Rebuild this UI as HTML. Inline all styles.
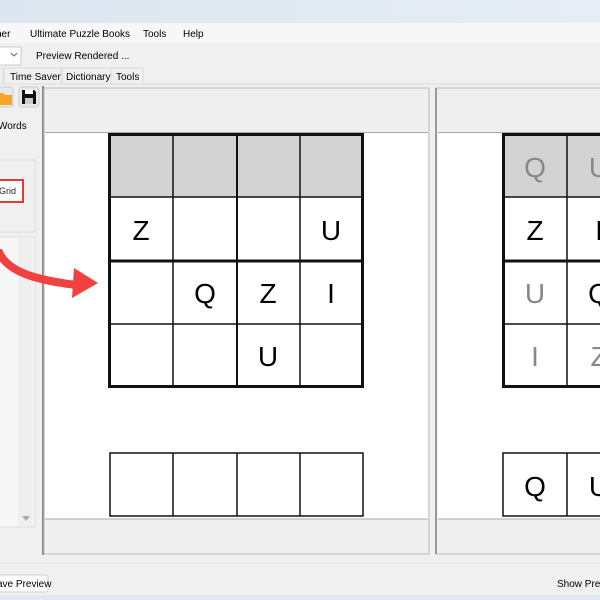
<!DOCTYPE html>
<html><head><meta charset="utf-8"><style>
html,body{margin:0;padding:0;width:600px;height:600px;overflow:hidden;background:#f0f0f0;font-family:"Liberation Sans",sans-serif}
svg{display:block}
</style></head><body>
<svg width="600" height="600" xmlns="http://www.w3.org/2000/svg" font-family="Liberation Sans, sans-serif">
<defs><linearGradient id="tb" x1="0" y1="0" x2="1" y2="0"><stop offset="0" stop-color="#dde6f0"/><stop offset="1" stop-color="#e6edf5"/></linearGradient></defs>
<rect width="600" height="600" fill="#f0f0f0"/>
<rect width="600" height="23" fill="url(#tb)"/>
<rect y="23" width="600" height="20" fill="#f7f7f7"/>
<g font-size="10" fill="#000">
<text x="-4" y="37">her</text><text x="30" y="37">Ultimate Puzzle Books</text><text x="143" y="37">Tools</text><text x="183" y="37">Help</text>
<text x="36" y="59">Preview Rendered ...</text>
</g>
<rect x="-2" y="47" width="23" height="18" fill="#fff" stroke="#ccc"/>
<path d="M11 53 l3 3 l3 -3" stroke="#666" fill="none"/>
<line x1="0" y1="84" x2="600" y2="84" stroke="#ddd"/>
<rect x="-1" y="68" width="4" height="16" fill="#f0f0f0" stroke="#ddd"/>
<rect x="4" y="68" width="57" height="16" fill="#f0f0f0" stroke="#ddd"/>
<rect x="62" y="68" width="49" height="16" fill="#f0f0f0" stroke="#ddd"/>
<rect x="111" y="68" width="32" height="16" fill="#f0f0f0" stroke="#ddd"/>
<g font-size="10"><text x="10" y="80">Time Saver</text><text x="66" y="80">Dictionary</text><text x="116" y="80">Tools</text></g>
<rect x="-4" y="87" width="17" height="20" rx="3" fill="#e8e8e8" stroke="#ccc"/>
<path d="M-2 93 h5 l2 2 h7 v10 h-14z" fill="#f5a623"/>
<rect x="19" y="87" width="20" height="20" rx="3" fill="#e8e8e8" stroke="#ccc"/>
<path d="M22 90 h12 l2 2 v12 h-14z" fill="#111"/><rect x="25" y="90" width="8" height="4" fill="#fff"/><rect x="25" y="98" width="8" height="6" fill="#ccc"/>
<text x="-2" y="129" font-size="10">Words</text>
<rect x="-2" y="160" width="37" height="72" fill="none" stroke="#ddd"/>
<rect x="-4" y="180" width="27" height="22" fill="#fff" stroke="#e53935" stroke-width="2"/>
<text x="-1" y="194" font-size="9" fill="#223">Grid</text>
<rect x="-2" y="237" width="37" height="290" fill="#f7f7f7" stroke="#ddd"/>
<rect x="18" y="238" width="15" height="288" fill="#efefef"/>
<path d="M22 276 l4 -5 l4 5z M22 516 l4 5 l4 -5z" fill="#aaa"/>
<line x1="43" y1="86" x2="43" y2="555" stroke="#888" stroke-width="2"/>
<rect x="44" y="88" width="385" height="466" fill="#efefef" stroke="#bbb"/>
<rect x="45" y="133" width="383" height="386" fill="#fff"/>
<line x1="45" y1="132.5" x2="428" y2="132.5" stroke="#aaa"/>
<line x1="45" y1="519" x2="428" y2="519" stroke="#aaa"/>
<rect x="436" y="88" width="170" height="466" fill="#efefef" stroke="#bbb"/>
<line x1="436" y1="88" x2="436" y2="554" stroke="#999" stroke-width="2"/>
<rect x="438" y="133" width="170" height="386" fill="#fff"/>
<line x1="438" y1="132.5" x2="600" y2="132.5" stroke="#aaa"/>
<line x1="438" y1="519" x2="600" y2="519" stroke="#aaa"/>
<rect x="110" y="135" width="252" height="62" fill="#d3d3d3"/>
<g stroke="#111" fill="none" stroke-width="1.5">
<line x1="173" y1="134" x2="173" y2="387"/><line x1="237" y1="134" x2="237" y2="387" stroke-width="2"/><line x1="300" y1="134" x2="300" y2="387"/>
<line x1="109" y1="197" x2="363" y2="197"/><line x1="109" y1="324" x2="363" y2="324"/>
<line x1="109" y1="261" x2="363" y2="261" stroke-width="3"/>
<rect x="109.5" y="134.5" width="253" height="252" stroke-width="3"/>
<rect x="110" y="453" width="253" height="63"/>
<line x1="173" y1="453" x2="173" y2="516"/><line x1="237" y1="453" x2="237" y2="516"/><line x1="300" y1="453" x2="300" y2="516"/>
</g>
<g font-size="28" text-anchor="middle" fill="#000">
<text x="141" y="240">Z</text><text x="331" y="240">U</text>
<text x="205" y="303">Q</text><text x="268" y="303">Z</text><text x="331" y="303">I</text>
<text x="268" y="366">U</text>
</g>
<rect x="504" y="135" width="100" height="62" fill="#d3d3d3"/>
<g stroke="#111" fill="none" stroke-width="1.5">
<line x1="567" y1="134" x2="567" y2="387"/>
<line x1="503" y1="197" x2="600" y2="197"/><line x1="503" y1="324" x2="600" y2="324"/>
<line x1="503" y1="261" x2="600" y2="261" stroke-width="3"/>
<rect x="503.5" y="134.5" width="130" height="252" stroke-width="3"/>
<rect x="503" y="453" width="130" height="63"/>
<line x1="567" y1="453" x2="567" y2="516"/>
</g>
<g font-size="28" text-anchor="middle">
<text x="535" y="177" fill="#888">Q</text><text x="599" y="177" fill="#888">U</text>
<text x="535" y="240">Z</text><text x="599" y="240">I</text>
<text x="535" y="303" fill="#888">U</text><text x="599" y="303">Q</text>
<text x="535" y="366" fill="#888">I</text><text x="599" y="366" fill="#888">Z</text>
<text x="535" y="496">Q</text><text x="599" y="496">U</text>
</g>
<path d="M-2 250 C6 272 36 280 76 285" stroke="#f04040" stroke-width="8" fill="none"/>
<path d="M74 268 L98 283 L72 298z" fill="#f04040"/>
<line x1="0" y1="563" x2="600" y2="563" stroke="#e6e6e6"/>
<rect x="-4" y="575" width="52" height="17" rx="2" fill="#fff" stroke="#ccc"/>
<text x="-3" y="587" font-size="10">ave Preview</text>
<text x="557" y="587" font-size="10">Show Preview</text>
<rect y="595" width="600" height="5" fill="#dfe8f3"/>
</svg>
</body></html>
